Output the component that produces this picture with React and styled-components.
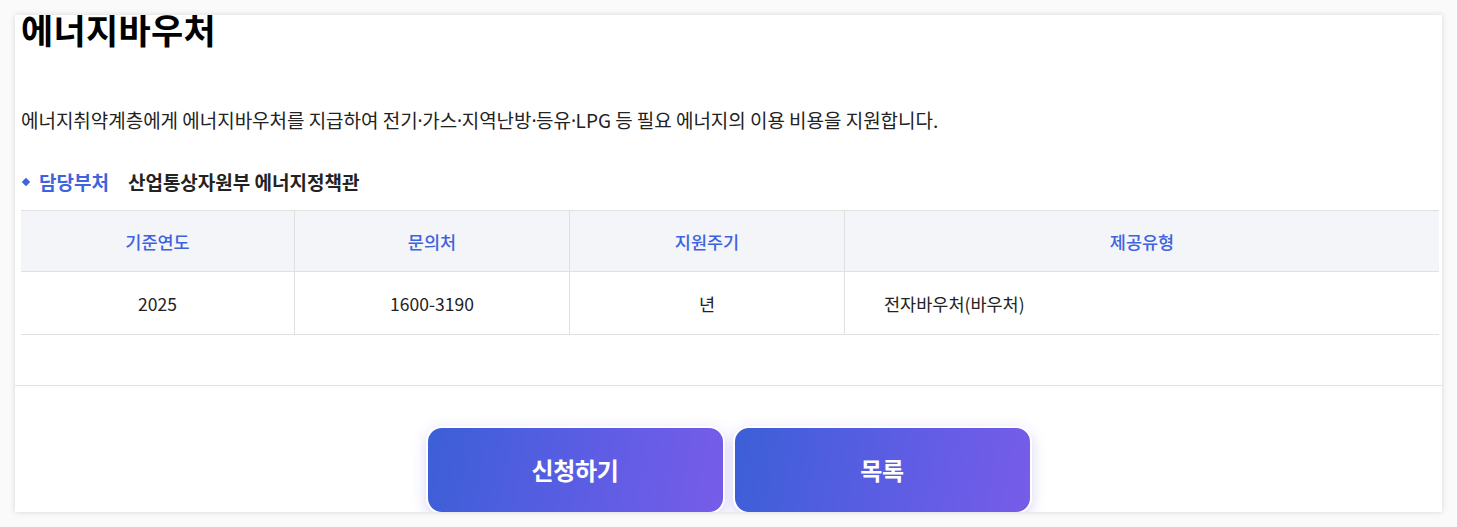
import React from "react";
import styled, { createGlobalStyle } from "styled-components";

const GlobalStyle = createGlobalStyle`
  html, body {
    margin: 0;
    padding: 0;
    background: #fafafa;
    font-family: "Noto Sans CJK KR", "Noto Sans", sans-serif;
  }
`;

const Page = styled.div`
  padding: 15px;
  height: 527px;
  box-sizing: border-box;
`;

const Card = styled.div`
  height: 497px;
  background: #fff;
  box-shadow: 0 0 6px rgba(0, 0, 0, 0.14);
  display: flex;
  flex-direction: column;
  overflow: hidden;
`;

const TopSection = styled.div`
  flex-shrink: 0;
  height: 371px;
  box-sizing: border-box;
  padding: 0 3px 0 6px;
  border-bottom: 1px solid #e2e2e2;
  display: flow-root;
`;

const Title = styled.h1`
  margin: -6px 0 0;
  font-size: 35px;
  line-height: 40px;
  font-weight: 700;
  color: #000;
  letter-spacing: 0.3px;
`;

const Desc = styled.p`
  margin: 59px 0 0;
  font-size: 19px;
  line-height: 24px;
  color: #222;
  letter-spacing: -0.03px;
`;

// narrow interpunct, as in the reference
const Dot = styled.span`
  font-family: "Noto Sans", sans-serif;
  letter-spacing: -0.5px;
`;

const DeptRow = styled.div`
  margin-top: 37px;
  display: flex;
  align-items: center;
  font-size: 19px;
  line-height: 24px;
`;

const Diamond = styled.span`
  width: 6px;
  height: 6px;
  background: #3d63dd;
  transform: rotate(45deg);
  margin: 0 10px 0 2px;
`;

const DeptLabel = styled.span`
  color: #3d63dd;
  font-weight: 600;
  margin-right: 19px;
`;

const DeptValue = styled.span`
  color: #222;
  font-weight: 600;
`;

const Table = styled.div`
  margin-top: 16px;
  display: grid;
  grid-template-columns: 274px 275px 275px 1fr;
  border-top: 1px solid #e0e0e0;
`;

const Cell = styled.div`
  display: flex;
  align-items: center;
  justify-content: ${(p) => (p.$left ? "flex-start" : "center")};
  padding-left: ${(p) => (p.$left ? "39px" : "0")};
  height: ${(p) => (p.$head ? "60px" : "62px")};
  background: ${(p) => (p.$head ? "#f4f5f9" : "#fff")};
  color: ${(p) => (p.$head ? "#3d63dd" : "#222")};
  font-size: 17.5px;
  font-weight: ${(p) => (p.$head ? 500 : 400)};
  border-bottom: 1px solid #e0e0e0;
  border-right: ${(p) => (p.$last ? "none" : "1px solid #e0e0e0")};
`;

const BottomSection = styled.div`
  flex: 1;
  display: flex;
  justify-content: center;
  gap: 8px;
  padding-top: 40px;
`;

const Button = styled.button`
  width: 299px;
  height: 88px;
  flex-shrink: 0;
  border: 2px solid #fff;
  border-radius: 16px;
  background: linear-gradient(100deg, #3c5fd7 0%, #5a5de3 50%, #775ce9 100%);
  box-shadow: 0 4px 14px rgba(110, 100, 230, 0.28);
  color: #fff;
  font-family: inherit;
  font-size: 24px;
  font-weight: 700;
  letter-spacing: -0.3px;
  padding-bottom: 2px;
  cursor: pointer;
`;

const headers = ["기준연도", "문의처", "지원주기", "제공유형"];
const values = ["2025", "1600-3190", "년", "전자바우처(바우처)"];

export default function App() {
  return (
    <>
      <GlobalStyle />
      <Page>
        <Card>
          <TopSection>
            <Title>에너지바우처</Title>
            <Desc>
              에너지취약계층에게 에너지바우처를 지급하여 전기<Dot>·</Dot>가스<Dot>·</Dot>지역난방<Dot>·</Dot>등유<Dot>·</Dot>LPG 등 필요 에너지의 이용 비용을 지원합니다.
            </Desc>
            <DeptRow>
              <Diamond />
              <DeptLabel>담당부처</DeptLabel>
              <DeptValue>산업통상자원부 에너지정책관</DeptValue>
            </DeptRow>
            <Table>
              {headers.map((h, i) => (
                <Cell $head key={h} $last={i === 3}>
                  {h}
                </Cell>
              ))}
              {values.map((v, i) => (
                <Cell key={v} $last={i === 3} $left={i === 3}>
                  {v}
                </Cell>
              ))}
            </Table>
          </TopSection>
          <BottomSection>
            <Button>신청하기</Button>
            <Button>목록</Button>
          </BottomSection>
        </Card>
      </Page>
    </>
  );
}
